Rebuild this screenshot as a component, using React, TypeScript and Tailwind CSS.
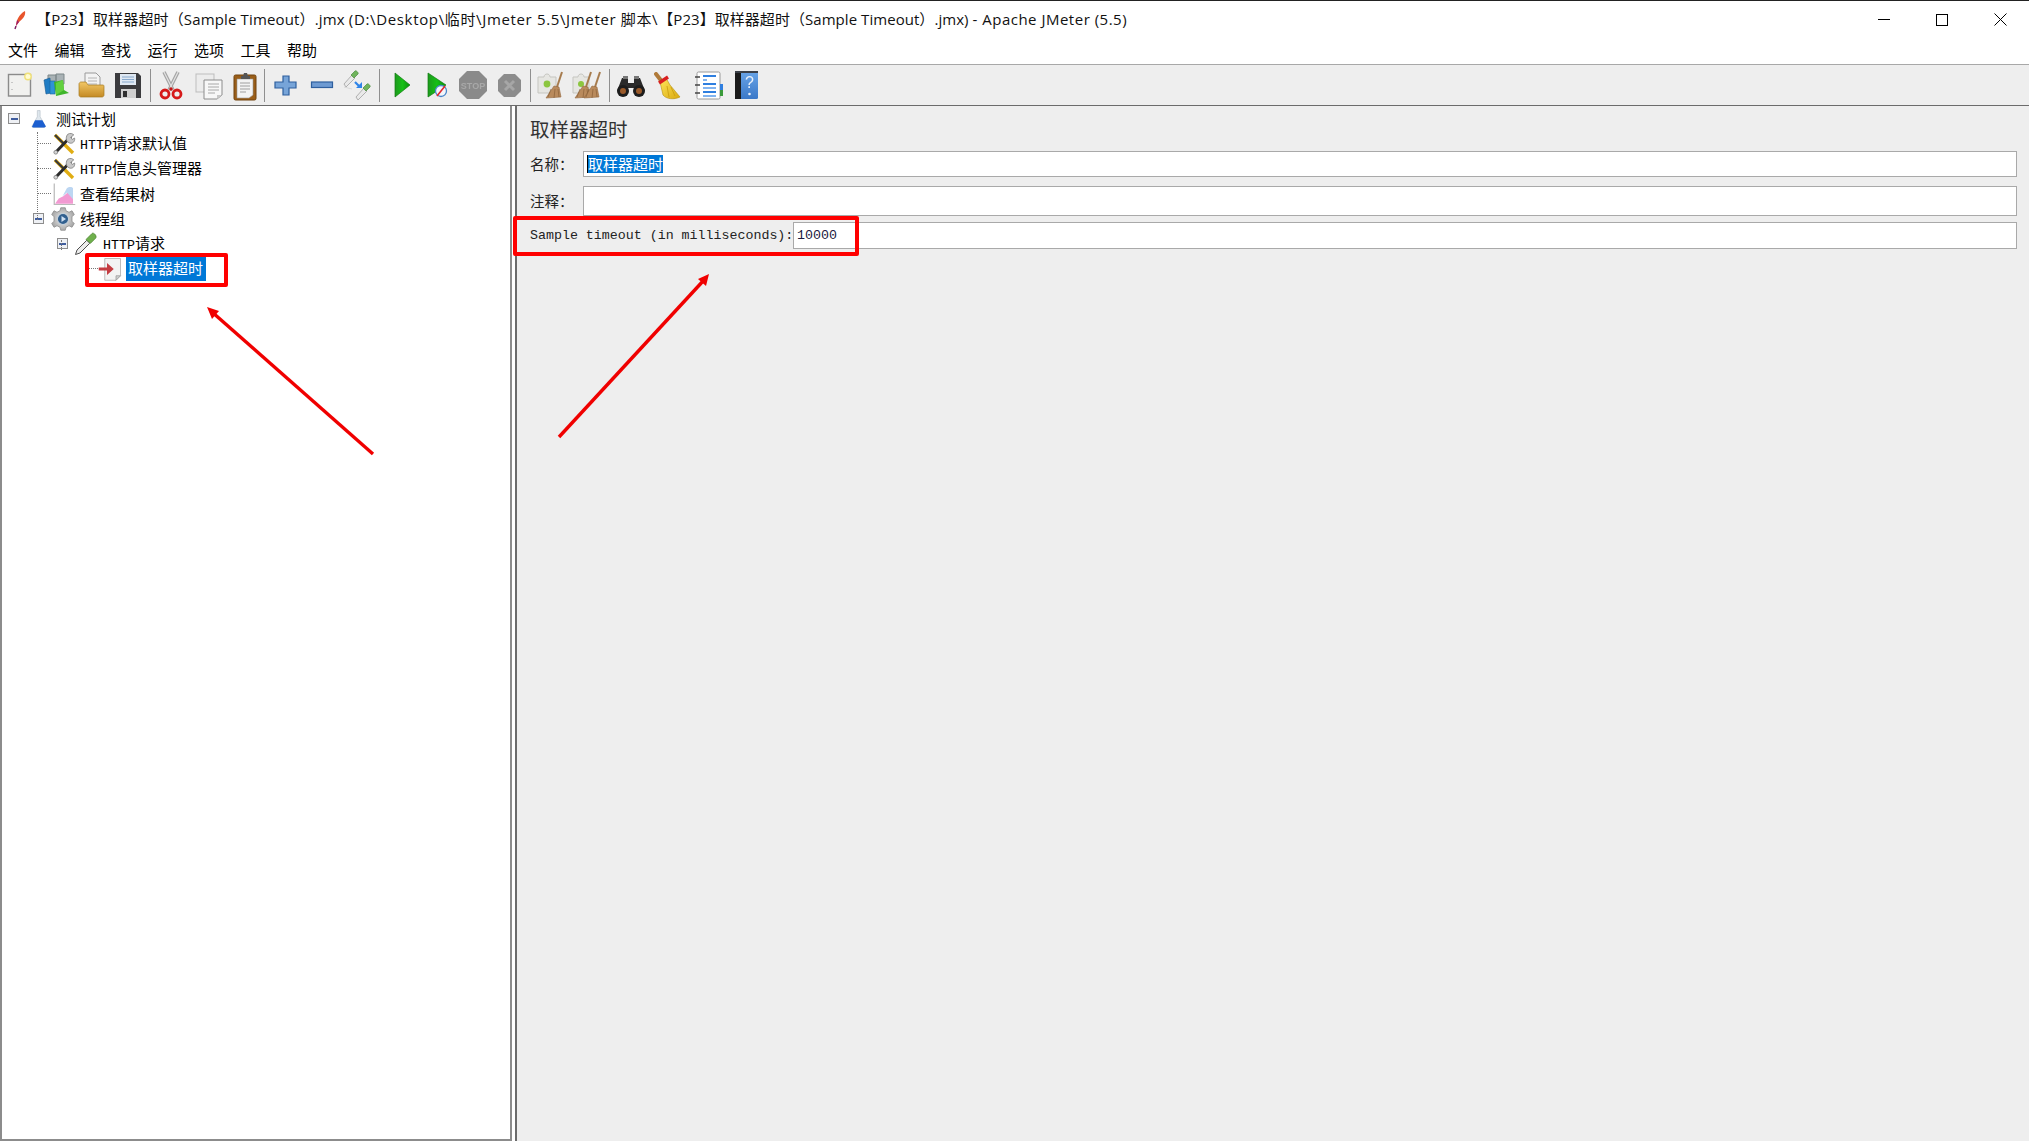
import type { ReactNode } from "react";

const cjk = "font-['Noto_Sans_CJK_SC',sans-serif]";
const mono = "font-['Liberation_Mono','Noto_Sans_CJK_SC',monospace]";

function Icon({ children, size = 32 }: { children: ReactNode; size?: number }) {
  return (
    <svg width={size} height={size} viewBox="0 0 32 32" className="shrink-0">
      {children}
    </svg>
  );
}

function Gradients() {
  return (
    <svg width="0" height="0" className="absolute">
      <defs>
        <linearGradient id="folder" x1="0" y1="0" x2="0" y2="1">
          <stop offset="0" stopColor="#f2c766" />
          <stop offset="1" stopColor="#c48a24" />
        </linearGradient>
        <linearGradient id="play" x1="0" y1="0" x2="1" y2="0">
          <stop offset="0" stopColor="#1d9a1d" />
          <stop offset="0.5" stopColor="#16c016" />
          <stop offset="1" stopColor="#0a8f0a" />
        </linearGradient>
        <linearGradient id="broom" x1="0" y1="0" x2="1" y2="1">
          <stop offset="0" stopColor="#ffe65a" />
          <stop offset="1" stopColor="#d9a90f" />
        </linearGradient>
        <linearGradient id="bluebook" x1="0" y1="0" x2="0" y2="1">
          <stop offset="0" stopColor="#6aa5e8" />
          <stop offset="1" stopColor="#3a78c8" />
        </linearGradient>
        <radialGradient id="gear" cx="0.5" cy="0.5" r="0.6">
          <stop offset="0" stopColor="#f2f2f2" />
          <stop offset="1" stopColor="#9a9a9a" />
        </radialGradient>
      </defs>
    </svg>
  );
}

const NewIcon = () => (
  <Icon>
    <rect x="4.5" y="5.5" width="22" height="21.5" fill="#f1f1ef" stroke="#8b8b8b" strokeWidth="1.4" />
    <path d="M8 13v1M8 20v1" stroke="#aaa" strokeWidth="1.2" />
    <circle cx="24" cy="7.5" r="3.2" fill="#fffbd0" stroke="#efe07a" strokeWidth="1.4" />
  </Icon>
);

const TemplatesIcon = () => (
  <Icon>
    <path d="M8 6h8v10H8zM16 5h8v10h-8z" fill="#a9b2b5" stroke="#7d8789" />
    <path d="M4 11l6-2 1 15-5 1z" fill="#1f7cc4" stroke="#15588f" strokeWidth="0.6" />
    <path d="M10 12h5v13h-5z" fill="#2f93d6" stroke="#1a669e" strokeWidth="0.6" />
    <path d="M14 13l9-2 1 10 5 3-13 3z" fill="#3fb52b" />
    <path d="M23 11l1 10-8 5V14z" fill="#62d03f" />
  </Icon>
);

const OpenIcon = () => (
  <Icon>
    <path d="M9 4h11l4 4v10H9z" fill="#f3f3f3" stroke="#9a9a9a" />
    <path d="M12 9h9M12 12h9M12 15h9" stroke="#b4b4b4" />
    <path d="M3 15c0-1 1-2 2-2h5l2 3h15c1 0 1 1 1 2v8c0 1-1 2-2 2H5c-1 0-2-1-2-2z" fill="url(#folder)" stroke="#a5781f" strokeWidth="0.7" />
  </Icon>
);

const SaveIcon = () => (
  <Icon>
    <path d="M3 4h23l3 3v22H3z" fill="#3b3b3e" />
    <rect x="8" y="5" width="16" height="11" fill="#dfe8f2" />
    <path d="M10 8h12M10 10.5h12M10 13h12" stroke="#87a8cc" strokeWidth="1.2" />
    <rect x="9" y="20" width="15" height="9" fill="#cfcfcf" />
    <rect x="11" y="22" width="4" height="6" fill="#2f2f2f" />
  </Icon>
);

const CutIcon = () => (
  <Icon>
    <path d="M9 3l9 18M23 3l-9 18" stroke="#a4a4a4" strokeWidth="3.6" />
    <path d="M9 3l9 18M23 3l-9 18" stroke="#e2e2e2" strokeWidth="1.2" />
    <circle cx="10" cy="25" r="4" fill="none" stroke="#d61a1a" strokeWidth="2.8" />
    <circle cx="22" cy="25" r="4" fill="none" stroke="#d61a1a" strokeWidth="2.8" />
    <circle cx="16" cy="20" r="1.8" fill="#c01818" />
  </Icon>
);

const CopyIcon = () => (
  <Icon>
    <rect x="4" y="5" width="18" height="18" fill="#ececec" stroke="#bdbdbd" />
    <path d="M12 11h18v15l-5 4H12z" fill="#f7f7f7" stroke="#8c8c8c" />
    <path d="M16 15h11M16 18h11M16 21h11M16 24h7" stroke="#a8a8a8" />
    <path d="M25 30v-4h5z" fill="#c8c8c8" />
  </Icon>
);

const PasteIcon = () => (
  <Icon>
    <rect x="5" y="6" width="22" height="25" rx="1.5" fill="#9a5e18" stroke="#70430f" />
    <path d="M8 10h16v16l-4 3H8z" fill="#f3f3f3" stroke="#999" strokeWidth="0.6" />
    <path d="M11 14h10M11 17h10M11 20h10M11 23h6" stroke="#9f9f9f" />
    <path d="M12 7h2l1-3h3l1 3h2v3H12z" fill="#555" />
  </Icon>
);

const PlusIcon = () => (
  <Icon>
    <path d="M13 7h6v6h7v6h-7v7h-6v-7H5v-6h8z" fill="#77a4d8" stroke="#2e5f9e" strokeWidth="1.2" />
  </Icon>
);

const MinusIcon = () => (
  <Icon>
    <rect x="5.5" y="13" width="21" height="5.5" fill="#6d9ad2" stroke="#2e5f9e" strokeWidth="1.2" />
  </Icon>
);

function Dropper({ x, y, s = 1 }: { x: number; y: number; s?: number }) {
  return (
    <g transform={`translate(${x} ${y}) scale(${s})`}>
      <path d="M0 14l8-9 3 3-9 9z" fill="#e9e9e9" stroke="#9f9f9f" strokeWidth="0.8" />
      <path d="M7 5l4-4c1-1 4 2 3 3l-4 4z" fill="#6fb45c" stroke="#4e8b40" strokeWidth="0.7" />
    </g>
  );
}

const ToggleIcon = () => (
  <Icon>
    <Dropper x={2} y={1} />
    <Dropper x={14} y={14} />
    <path d="M13 13l5 5" stroke="#2f84e8" strokeWidth="2.2" />
    <path d="M14 19h6v-6z" fill="#2f84e8" />
    <path d="M2 18l8 2" stroke="#d8d8d8" />
  </Icon>
);

const PlayIcon = () => (
  <Icon>
    <path d="M10 4l15 12-15 12z" fill="url(#play)" stroke="#0e7a0e" strokeWidth="0.7" />
  </Icon>
);

const PlayNoTimerIcon = () => (
  <Icon>
    <path d="M7 4l18 12L7 28z" fill="url(#play)" stroke="#0e7a0e" strokeWidth="0.7" />
    <circle cx="20" cy="22" r="5.5" fill="#f3f6fb" stroke="#4b86c9" strokeWidth="1.3" />
    <path d="M16 27l8-10" stroke="#e2262b" strokeWidth="1.6" />
  </Icon>
);

const StopIcon = () => (
  <Icon>
    <path d="M10 2h12l8 8v12l-8 8H10l-8-8V10z" fill="#8a8a8a" />
    <text x="16" y="20" textAnchor="middle" fontFamily="Liberation Sans" fontWeight="700" fontSize="9" fill="#a8a8a8">
      STOP
    </text>
  </Icon>
);

const ShutdownIcon = () => (
  <Icon>
    <path d="M11 5h11l6 6v11l-6 6H11l-6-6V11z" fill="#8c8c8c" />
    <path d="M12 12l9 9M21 12l-9 9" stroke="#a6a6a6" strokeWidth="3" />
  </Icon>
);

function BroomLeaf({ x }: { x: number }) {
  return (
    <g transform={`translate(${x} 0)`}>
      <path d="M24 3l-5 15" stroke="#a67b4d" strokeWidth="2" />
      <path d="M16 17l5 1 2 10-15 1z" fill="#b98a5c" stroke="#94683f" strokeWidth="0.6" />
      <path d="M13 20l-3 8M17 20l-1 9M20 20l1 8" stroke="#8a6038" strokeWidth="0.7" />
    </g>
  );
}

const ClearIcon = () => (
  <Icon>
    <path d="M3 8h6c0-4 6-4 6 0h6v16H3z" fill="#e6e6e2" stroke="#c5c5c0" />
    <circle cx="12" cy="15" r="3.4" fill="#8cc63f" />
    <BroomLeaf x={3} />
  </Icon>
);

const ClearAllIcon = () => (
  <Icon>
    <path d="M1 8h5c0-4 6-4 6 0h5v16H1z" fill="#e6e6e2" stroke="#c5c5c0" />
    <circle cx="9" cy="15" r="3" fill="#8cc63f" />
    <BroomLeaf x={-5} />
    <BroomLeaf x={4} />
  </Icon>
);

const BinocularsIcon = () => (
  <Icon>
    <path d="M7 9h6v5h6V9h6l5 13H19v-3h-6v3H2z" fill="#2a2a2a" />
    <circle cx="8" cy="22" r="6" fill="#1d1d1d" />
    <circle cx="24" cy="22" r="6" fill="#1d1d1d" />
    <circle cx="8" cy="22" r="3" fill="#9a5a2a" />
    <circle cx="24" cy="22" r="3" fill="#9a5a2a" />
    <rect x="8" y="7" width="5" height="3" fill="#777" />
    <rect x="19" y="7" width="5" height="3" fill="#777" />
  </Icon>
);

const BroomIcon = () => (
  <Icon>
    <g transform="translate(-3 0)">
      <path d="M7 5l7 9" stroke="#b07a3a" strokeWidth="4" strokeLinecap="round" />
      <path d="M11 13l6-4 4 7 10 12c-6 3-14 2-17-2z" fill="url(#broom)" stroke="#b58e10" strokeWidth="0.6" />
      <path d="M10 14l9-6" stroke="#d81f1f" strokeWidth="3.4" />
      <path d="M18 17l2 11M22 18l4 9" stroke="#c89c10" strokeWidth="0.8" />
    </g>
  </Icon>
);

const ListIcon = () => (
  <Icon>
    <rect x="5" y="3" width="23" height="27" rx="1.5" fill="#fff" stroke="#9a9a9a" />
    <path d="M11 7h13M11 15h13M11 23h13" stroke="#2f7fe0" strokeWidth="2" />
    <path d="M11 11h4M11 19h13M11 27h13" stroke="#5a9cec" strokeWidth="1.4" />
    <path d="M3 8h5M3 16h5M3 24h5" stroke="#444" strokeWidth="1.6" />
    <rect x="28" y="15" width="3" height="6" fill="#2f7fe0" />
    <rect x="28" y="21" width="3" height="6" fill="#3a9a3a" />
  </Icon>
);

const HelpIcon = () => (
  <Icon>
    <rect x="5" y="2" width="23" height="28" rx="1.5" fill="url(#bluebook)" />
    <rect x="5" y="2" width="6" height="28" fill="#1b1b1b" />
    <path d="M5 2h23v2H5z" fill="#3c4048" />
    <text x="19.5" y="19" textAnchor="middle" fontFamily="Liberation Sans" fontSize="16" fill="#e8f0fa">
      ?
    </text>
    <circle cx="19.5" cy="25" r="1.3" fill="#e8f0fa" />
  </Icon>
);

const FlaskIcon = () => (
  <Icon size={18}>
    <path d="M13 1h5v11l9 16c1 2 0 3-2 3H6c-2 0-3-1-2-3l9-16z" fill="#dfe7ee" stroke="#aeb9c2" />
    <path d="M9 18h13l6 11c0 1-1 2-3 2H6c-2 0-3-1-2-2z" fill="#1c5fd0" />
  </Icon>
);

const ToolsIcon = () => (
  <Icon size={24}>
    <path d="M4 4l24 24" stroke="#e0ad12" strokeWidth="4.5" />
    <path d="M4 4l12 12" stroke="#3a3a3a" strokeWidth="3" />
    <path d="M25 6L5 27" stroke="#2b2b2b" strokeWidth="4" />
    <path d="M21 3c3-2 7-1 8 1l-4 3 2 3 3-2c1 3-1 7-5 7-3 0-6-3-6-6 0-3 1-5 2-6z" fill="#c9c9c9" stroke="#777" />
    <circle cx="5" cy="27" r="2.5" fill="#d6d6d6" stroke="#777" />
  </Icon>
);

const ChartIcon = () => (
  <Icon size={24}>
    <path d="M3 2v28h28" fill="none" stroke="#b9b9b9" strokeWidth="1.6" />
    <path d="M4 29l5-7 6-3 6-5 7 3v12z" fill="#f29ad2" />
    <path d="M14 19l6-11c2-2 7-2 8 0v15l-8-9z" fill="#bcd6f2" />
  </Icon>
);

const GearIcon = () => (
  <Icon size={24}>
    <path d="M13 1h6l1 4 4 2 4-2 3 5-3 3v6l3 3-3 5-4-2-4 2-1 4h-6l-1-4-4-2-4 2-3-5 3-3v-6L1 10l3-5 4 2 4-2z" fill="url(#gear)" stroke="#8a8a8a" />
    <circle cx="16" cy="16" r="7.5" fill="#32608f" stroke="#c5cfd8" strokeWidth="1.5" />
    <path d="M14 12l6 4-6 4z" fill="#cfe0f2" />
  </Icon>
);

const PipetteIcon = () => (
  <Icon size={24}>
    <path d="M2 30l2-6 13-13 4 4-13 13z" fill="#ececec" stroke="#4a4a4a" strokeWidth="1.3" />
    <path d="M16 10l8-8c2-2 7 3 5 6l-7 7z" fill="#6fb04c" stroke="#4c8433" />
  </Icon>
);

const TimerDocIcon = () => (
  <Icon size={24}>
    <path d="M9 2h21v23l-6 6H9z" fill="#f3f3f3" stroke="#a8a8a8" />
    <path d="M24 31v-6h6z" fill="#cfcfcf" stroke="#9a9a9a" />
    <path d="M1 14h11V8l9 8-9 8v-6H1z" fill="#c43d42" />
  </Icon>
);

function Tool({ width, children }: { width: string; children: ReactNode }) {
  return <div className={`flex items-center justify-center blur-[0.4px] ${width}`}>{children}</div>;
}

function ToolSep({ margin }: { margin: string }) {
  return <div className={`h-[33px] w-px bg-[#8f8f8f] ${margin}`} />;
}

function Toolbar() {
  return (
    <div className="flex h-[41px] items-center border-b border-[#6b6b6b] bg-[#eeeeee] pl-[2px]">
      <Tool width="w-[36px]"><NewIcon /></Tool>
      <Tool width="w-[36px]"><TemplatesIcon /></Tool>
      <Tool width="w-[36px]"><OpenIcon /></Tool>
      <Tool width="w-[36px]"><SaveIcon /></Tool>
      <ToolSep margin="ml-[4px] mr-px" />
      <Tool width="w-[37px]"><CutIcon /></Tool>
      <Tool width="w-[37px]"><CopyIcon /></Tool>
      <Tool width="w-[37px]"><PasteIcon /></Tool>
      <ToolSep margin="ml-px mr-[3px]" />
      <Tool width="w-[36px]"><PlusIcon /></Tool>
      <Tool width="w-[36px]"><MinusIcon /></Tool>
      <Tool width="w-[36px]"><ToggleIcon /></Tool>
      <ToolSep margin="ml-[3px] mr-[3px]" />
      <Tool width="w-[36px]"><PlayIcon /></Tool>
      <Tool width="w-[36px]"><PlayNoTimerIcon /></Tool>
      <Tool width="w-[36px]"><StopIcon /></Tool>
      <Tool width="w-[36px]"><ShutdownIcon /></Tool>
      <ToolSep margin="ml-[3px] mr-px" />
      <Tool width="w-[37px]"><ClearIcon /></Tool>
      <Tool width="w-[37px]"><ClearAllIcon /></Tool>
      <ToolSep margin="ml-[3px] mr-[2px]" />
      <Tool width="w-[37px]"><BinocularsIcon /></Tool>
      <Tool width="w-[37px]"><BroomIcon /></Tool>
      <Tool width="w-[44px]"><ListIcon /></Tool>
      <Tool width="w-[32px]"><HelpIcon /></Tool>
    </div>
  );
}

function Toggle({ size }: { size: string }) {
  return (
    <span className={`flex shrink-0 items-center justify-center border border-[#8d8d8d] bg-[#eef0f4] ${size}`}>
      <span className="h-[2px] w-[7px] bg-[#3f5d9e]" />
    </span>
  );
}

function Label({ http, text }: { http?: boolean; text: string }) {
  return (
    <span className="text-[15px] leading-none whitespace-nowrap text-black">
      {http && <span className={`${mono} text-[13.3px]`}>HTTP</span>}
      <span className={cjk}>{text}</span>
    </span>
  );
}

function Tree() {
  return (
    <div className="relative h-full w-[512px] border-[2px] border-t-0 border-[#8c8c8c] bg-white">
      {/* tree guide lines */}
      <span className="absolute top-[26px] left-[35px] h-[88px] border-l border-dotted border-[#777]" />
      <span className="absolute top-[37px] left-[35px] w-[14px] border-t border-dotted border-[#777]" />
      <span className="absolute top-[62px] left-[35px] w-[14px] border-t border-dotted border-[#777]" />
      <span className="absolute top-[87px] left-[35px] w-[14px] border-t border-dotted border-[#777]" />
      <span className="absolute top-[134px] left-[59px] h-[10px] border-l border-dotted border-[#777]" />
      <span className="absolute top-[162px] left-[86px] w-[10px] border-t border-dotted border-[#777]" />

      <div className="flex h-[25px] items-center pl-[6px]">
        <Toggle size="h-[11px] w-[12px]" />
        <span className="w-[10px]" />
        <FlaskIcon />
        <span className="w-[8px]" />
        <Label text="测试计划" />
      </div>
      <div className="flex h-[25px] items-center gap-[4px] pl-[50px]">
        <ToolsIcon />
        <Label http text="请求默认值" />
      </div>
      <div className="flex h-[25px] items-center gap-[4px] pl-[50px]">
        <ToolsIcon />
        <Label http text="信息头管理器" />
      </div>
      <div className="flex h-[25px] items-center gap-[4px] pl-[50px]">
        <ChartIcon />
        <Label text="查看结果树" />
      </div>
      <div className="flex h-[25px] items-center pl-[31px]">
        <Toggle size="h-[11px] w-[11px]" />
        <span className="w-[7px]" />
        <GearIcon />
        <span className="w-[5px]" />
        <Label text="线程组" />
      </div>
      <div className="flex h-[25px] items-center pl-[55px]">
        <Toggle size="h-[11px] w-[11px]" />
        <span className="w-[6px]" />
        <PipetteIcon />
        <span className="w-[5px]" />
        <Label http text="请求" />
      </div>
      <div className="flex h-[25px] items-center pl-[96px]">
        <TimerDocIcon />
        <span className="ml-[4px] flex h-[25px] w-[80px] items-center bg-[#0078d7] pl-[2px] text-[15px] whitespace-nowrap text-white">
          <span className={cjk}>取样器超时</span>
        </span>
      </div>
    </div>
  );
}

function FormInput({ height, children }: { height: string; children?: ReactNode }) {
  return (
    <div className={`flex min-w-0 flex-1 items-center border border-[#a9a9a9] bg-white ${height}`}>{children}</div>
  );
}

function Editor() {
  return (
    <div className="h-full min-w-0 flex-1 border-l-[2px] border-[#6b6b6b] bg-[#eeeeee] pr-[12px] pl-[13px] text-[#222]">
      <div className={`flex h-[45px] items-center text-[19.5px] text-[#333] ${cjk}`}>取样器超时</div>
      <div className="flex items-center">
        <span className={`w-[53px] shrink-0 text-[14.5px] ${cjk}`}>名称：</span>
        <FormInput height="h-[26px]">
          <span className={`ml-[3px] h-[18px] w-[76px] border-l border-black bg-[#0078d7] text-[15px] leading-[18px] text-white ${cjk}`}>
            取样器超时
          </span>
        </FormInput>
      </div>
      <div className="mt-[9px] flex items-center">
        <span className={`w-[53px] shrink-0 text-[14.5px] ${cjk}`}>注释：</span>
        <FormInput height="h-[30px]" />
      </div>
      <div className="mt-[6px] flex items-center">
        <span className={`w-[263px] shrink-0 text-[13.3px] whitespace-nowrap ${mono}`}>
          Sample timeout (in milliseconds):
        </span>
        <FormInput height="h-[27px]">
          <span className={`ml-[3px] text-[13.3px] text-[#1a1a40] ${mono}`}>10000</span>
        </FormInput>
      </div>
    </div>
  );
}

function Annotations() {
  return (
    <>
      <div className="absolute top-[253px] left-[85px] h-[34px] w-[143px] rounded-[2px] border-[4px] border-[#ff0000]" />
      <div className="absolute top-[216px] left-[513px] h-[40px] w-[346px] rounded-[2px] border-[4px] border-[#ff0000]" />
      <svg className="absolute inset-0" width="2029" height="1143">
        <path d="M373 454L212 312" stroke="#f00000" strokeWidth="3.4" />
        <path d="M207 307l12 4-7 8z" fill="#f00000" />
        <path d="M559 437L704 280" stroke="#f00000" strokeWidth="3.4" />
        <path d="M709 274l-3 12-8-7z" fill="#f00000" />
      </svg>
    </>
  );
}

export default function App() {
  return (
    <div className="relative flex h-screen w-screen flex-col overflow-hidden bg-white font-['Open_Sans','Noto_Sans_CJK_SC',sans-serif] text-black [text-spacing-trim:space-all]">
      <Gradients />
      <div className="flex h-[38px] items-center border-t border-[#222]">
        <svg width="16" height="20" viewBox="0 0 16 20" className="ml-[12px] shrink-0">
          <path d="M13 1c1 4-2 8-6 11l-3 4c0-5 3-12 9-15z" fill="#e8552c" />
          <path d="M7 12l-3 4 1-6z" fill="#9c1f6e" />
          <path d="M4 16l-1 3" stroke="#7a1a60" strokeWidth="1.4" />
        </svg>
        <span className="ml-[8px] text-[15px] whitespace-nowrap text-[#111]">
          <span className="tracking-[0.15px]">【P23】取样器超时（Sample Timeout）.jmx </span>
          <span className="tracking-[0.65px]">(D:\Desktop\临时\Jmeter 5.5\Jmeter 脚本\</span>
          <span className="tracking-[0.05px]">【P23】取样器超时（Sample Timeout）.jmx) </span>
          <span className="tracking-[0.5px]">- Apache JMeter (5.5)</span>
        </span>
        <div className="ml-auto flex items-center">
          <div className="flex w-[58px] justify-center">
            <span className="h-px w-[12px] bg-black" />
          </div>
          <div className="flex w-[58px] justify-center">
            <span className="h-[12px] w-[12px] border border-black" />
          </div>
          <div className="flex w-[58px] justify-center">
            <svg width="13" height="13" viewBox="0 0 13 13">
              <path d="M.5.5l12 12M12.5.5l-12 12" stroke="#000" />
            </svg>
          </div>
        </div>
      </div>
      <div className={`flex h-[27px] items-start gap-[16.5px] border-b border-[#a8a8a8] pl-[8px] text-[15px] leading-[24px] ${cjk}`}>
        {["文件", "编辑", "查找", "运行", "选项", "工具", "帮助"].map((m) => (
          <span key={m}>{m}</span>
        ))}
      </div>
      <Toolbar />
      <div className="flex min-h-0 flex-1 pb-[2px]">
        <Tree />
        <div className="w-[3px] shrink-0 bg-white" />
        <Editor />
      </div>
      <Annotations />
    </div>
  );
}
